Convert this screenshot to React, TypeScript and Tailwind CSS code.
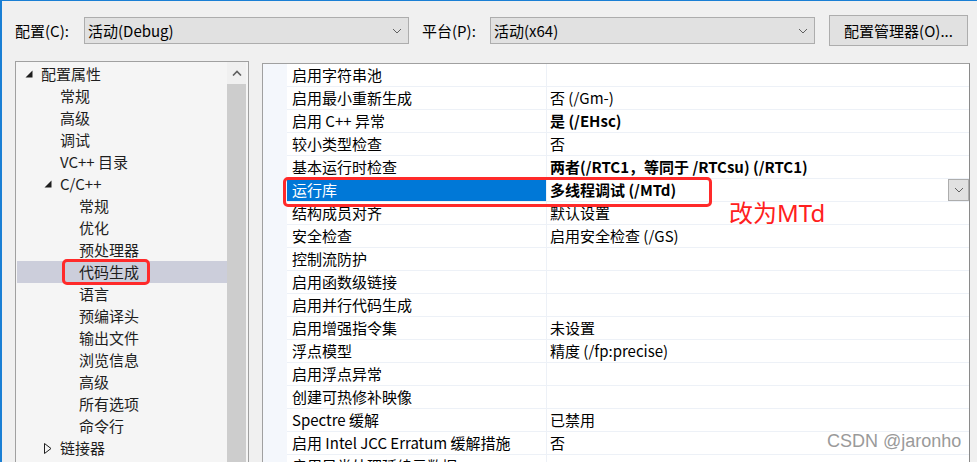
import React from "react";

type TreeItem = { label: string; level: number; tri?: "open" | "closed"; selected?: boolean };

const tree: TreeItem[] = [
  { label: "配置属性", level: 0, tri: "open" },
  { label: "常规", level: 1 },
  { label: "高级", level: 1 },
  { label: "调试", level: 1 },
  { label: "VC++ 目录", level: 1 },
  { label: "C/C++", level: 1, tri: "open" },
  { label: "常规", level: 2 },
  { label: "优化", level: 2 },
  { label: "预处理器", level: 2 },
  { label: "代码生成", level: 2, selected: true },
  { label: "语言", level: 2 },
  { label: "预编译头", level: 2 },
  { label: "输出文件", level: 2 },
  { label: "浏览信息", level: 2 },
  { label: "高级", level: 2 },
  { label: "所有选项", level: 2 },
  { label: "命令行", level: 2 },
  { label: "链接器", level: 1, tri: "closed" },
];

type Prop = { name: string; value: string; bold?: boolean; selected?: boolean };

const props: Prop[] = [
  { name: "启用字符串池", value: "" },
  { name: "启用最小重新生成", value: "否 (/Gm-)" },
  { name: "启用 C++ 异常", value: "是 (/EHsc)", bold: true },
  { name: "较小类型检查", value: "否" },
  { name: "基本运行时检查", value: "两者(/RTC1，等同于 /RTCsu) (/RTC1)", bold: true },
  { name: "运行库", value: "多线程调试 (/MTd)", bold: true, selected: true },
  { name: "结构成员对齐", value: "默认设置" },
  { name: "安全检查", value: "启用安全检查 (/GS)" },
  { name: "控制流防护", value: "" },
  { name: "启用函数级链接", value: "" },
  { name: "启用并行代码生成", value: "" },
  { name: "启用增强指令集", value: "未设置" },
  { name: "浮点模型", value: "精度 (/fp:precise)" },
  { name: "启用浮点异常", value: "" },
  { name: "创建可热修补映像", value: "" },
  { name: "Spectre 缓解", value: "已禁用" },
  { name: "启用 Intel JCC Erratum 缓解措施", value: "否" },
  { name: "启用异常处理延续元数据", value: "" },
];

function Chevron() {
  return (
    <svg width="10" height="6" viewBox="0 0 10 6" className="shrink-0">
      <polyline points="1,1 5,5 9,1" fill="none" stroke="#606060" strokeWidth="1" />
    </svg>
  );
}

function Select({ text, width }: { text: string; width: string }) {
  return (
    <div
      className={`${width} h-[27px] flex items-center justify-between bg-[#e1e1e1] border border-[#adadad] pl-[3px] pr-[6px]`}
    >
      <span className="text-[15px] leading-[22px] text-black">{text}</span>
      <Chevron />
    </div>
  );
}

function Triangle({ kind }: { kind?: "open" | "closed" }) {
  if (!kind) return null;
  return (
    <div className="w-[16px] h-[22px] flex items-center shrink-0">
      {kind === "open" ? (
        <svg width="8" height="8" viewBox="0 0 8 8">
          <polygon points="7.5,0.5 7.5,7.5 0.5,7.5" fill="#1e1e1e" />
        </svg>
      ) : (
        <svg width="8" height="11" viewBox="0 0 8 11" className="mt-[1px]">
          <polygon points="0.5,0.5 7,5.5 0.5,10.5" fill="none" stroke="#1e1e1e" strokeWidth="1" />
        </svg>
      )}
    </div>
  );
}

function TreeRow({ item }: { item: TreeItem }) {
  let pad = "pl-[62px]";
  if (item.level === 0) pad = "pl-[8px]";
  else if (item.level === 1) pad = item.tri ? "pl-[27px]" : "pl-[43px]";
  return (
    <div
      className={`relative h-[22px] flex items-center ${pad} ${item.selected ? "bg-[#cccedb]" : ""}`}
    >
      <Triangle kind={item.tri} />
      <span className="text-[15px] leading-[22px] text-[#1e1e1e] whitespace-nowrap">{item.label}</span>
      {item.selected && (
        <span className="absolute left-[45px] top-[-2px] w-[88px] h-[26px] border-[3px] border-[#ff2a2a] rounded-[5px]" />
      )}
    </div>
  );
}

function PropRow({ p }: { p: Prop }) {
  return (
    <div className="flex h-[23px] border-b border-[#edf1f7]">
      <div
        className={`w-[259px] shrink-0 pl-[5px] flex items-center ${p.selected ? "bg-[#0078d7] text-white" : "bg-white text-black"}`}
      >
        <span className="text-[15px] leading-[22px] whitespace-nowrap">{p.name}</span>
      </div>
      <div className="flex-1 border-l border-[#edf1f7] bg-white pl-[3px] flex items-center justify-between">
        <span className={`text-[15px] leading-[22px] text-black whitespace-nowrap ${p.bold ? "font-bold" : ""}`}>
          {p.value}
        </span>
        {p.selected && (
          <div className="w-[21px] h-[22px] bg-[#e1e1e1] border border-[#adadad] flex items-center justify-center">
            <Chevron />
          </div>
        )}
      </div>
    </div>
  );
}

export default function App() {
  return (
    <div className="relative w-[977px] h-[462px] overflow-hidden bg-[#f0f0f0] border-t border-l-2 border-[#1a7fd4] font-['Noto_Sans_CJK_SC',sans-serif]">
      {/* top bar */}
      <div className="flex items-center h-[31px] mt-[14px] pl-[13px]">
        <span className="w-[69px] text-[15px] leading-[22px] text-black">配置(C):</span>
        <Select text="活动(Debug)" width="w-[325px]" />
        <span className="ml-[13px] w-[68px] text-[15px] leading-[22px] text-black">平台(P):</span>
        <Select text="活动(x64)" width="w-[325px]" />
        <div className="ml-[14px] w-[139px] h-[31px] bg-[#e1e1e1] border border-[#adadad] flex items-center justify-center">
          <span className="text-[15px] leading-[22px] text-black">配置管理器(O)...</span>
        </div>
      </div>

      {/* main */}
      <div className="flex mt-[15px] pl-[13px]">
        {/* tree */}
        <div className="w-[234px] h-[410px] border border-[#a0a0a0] bg-[#f5f5f5] flex">
          <div className="flex-1 pt-[1px] pl-[1px]">
            {tree.map((t, i) => (
              <TreeRow key={i} item={t} />
            ))}
          </div>
          <div className="w-[19px] mr-[2px] flex flex-col">
            <div className="h-[22px] bg-[#f0f0f0] flex items-center justify-center">
              <svg width="10" height="6" viewBox="0 0 10 6">
                <polyline points="1,5.5 5,1.5 9,5.5" fill="none" stroke="#606060" strokeWidth="1.6" />
              </svg>
            </div>
            <div className="flex-1 bg-[#cdcdcd]" />
          </div>
        </div>

        {/* property grid */}
        <div className="relative ml-[13px] mt-[2px] w-[708px] h-[410px] border border-[#a0a0a0] border-r-[#8a8a8a] bg-white flex">
          <div className="w-[24px] shrink-0 bg-[#f4f7fc]" />
          <div className="flex-1">
            {props.map((p, i) => (
              <PropRow key={i} p={p} />
            ))}
          </div>
          <span className="absolute left-[20px] top-[113px] w-[429px] h-[30px] border-[3px] border-[#ff2a2a] rounded-[5px]" />
        </div>
      </div>

      {/* annotation */}
      <span className="absolute left-[727px] top-[200px] text-[24px] leading-[24px] text-[#ff2020] whitespace-nowrap font-['Noto_Sans','Noto_Sans_CJK_SC',sans-serif]">
        改为MTd
      </span>

      {/* watermark */}
      <span className="absolute left-[825px] top-[430px] text-[18px] leading-[20px] text-[#9a9a9a] whitespace-nowrap font-['Liberation_Sans',sans-serif]">
        CSDN @jaronho
      </span>
    </div>
  );
}
